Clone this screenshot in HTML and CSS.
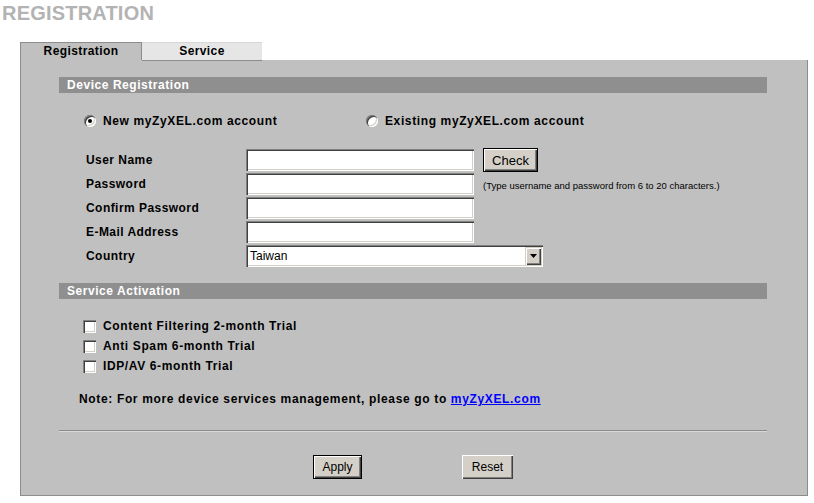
FILE: index.html
```html
<!DOCTYPE html>
<html>
<head>
<meta charset="utf-8">
<link rel="stylesheet" href="styles.css">
</head>
<body>
<h1 class="title">REGISTRATION</h1>
<div class="tabs">
  <div class="tab tab-active">Registration</div>
  <div class="tab tab-inactive">Service</div>
</div>
<div class="panel">
  <div class="section-bar">Device Registration</div>
  <div class="radio-row">
    <label class="opt opt-new"><span class="radio checked"></span><span class="opt-text">New myZyXEL.com account</span></label>
    <label class="opt"><span class="radio"></span><span class="opt-text">Existing myZyXEL.com account</span></label>
  </div>
  <div class="form">
    <div class="frow">
      <span class="flabel">User Name</span>
      <span class="field"></span>
      <span class="btn btn-default btn-check">Check</span>
    </div>
    <div class="frow">
      <span class="flabel">Password</span>
      <span class="field"></span>
      <span class="hint">(Type username and password from 6 to 20 characters.)</span>
    </div>
    <div class="frow">
      <span class="flabel">Confirm Password</span>
      <span class="field"></span>
    </div>
    <div class="frow">
      <span class="flabel">E-Mail Address</span>
      <span class="field"></span>
    </div>
    <div class="frow">
      <span class="flabel">Country</span>
      <span class="select"><span class="select-value">Taiwan</span><span class="select-arrow"><svg width="7" height="4" viewBox="0 0 7 4"><path d="M0 0h7L3.5 4z" fill="#000"/></svg></span></span>
    </div>
  </div>
  <div class="section-bar section-bar-2">Service Activation</div>
  <div class="checks">
    <label class="crow"><span class="checkbox"></span><span class="opt-text">Content Filtering 2-month Trial</span></label>
    <label class="crow"><span class="checkbox"></span><span class="opt-text">Anti Spam 6-month Trial</span></label>
    <label class="crow"><span class="checkbox"></span><span class="opt-text">IDP/AV 6-month Trial</span></label>
  </div>
  <div class="note">Note: For more device services management, please go to <a class="link" href="#">myZyXEL.com</a></div>
  <div class="divider"></div>
  <div class="actions">
    <span class="btn btn-default btn-apply">Apply</span>
    <span class="btn btn-reset">Reset</span>
  </div>
</div>
</body>
</html>
```
FILE: styles.css
```css
* { box-sizing: border-box; }
html, body { margin: 0; padding: 0; background: #fff; }
body {
  font-family: "Liberation Sans", Arial, sans-serif;
  font-size: 12px;
  color: #000;
  width: 814px;
  height: 503px;
  overflow: hidden;
}
.title {
  margin: 0;
  padding: 3px 0 0 2px;
  height: 42px;
  font-size: 20px;
  line-height: 20px;
  font-weight: bold;
  color: #b3b3b3;
  letter-spacing: 0.2px;
}
.tabs {
  display: flex;
  margin-left: 20px;
  height: 18px;
}
.tab {
  height: 18px;
  line-height: 17px;
  text-align: center;
  font-weight: bold;
  font-size: 12px;
  letter-spacing: 0.4px;
}
.tab-active {
  width: 122px;
  background: #c0c0c0;
  border: 1px solid #8c8c8c;
  border-bottom: none;
}
.tab-inactive {
  position: relative;
  z-index: 1;
  width: 120px;
  background: #e6e6e6;
  border-top: 1px solid #d6d6d6;
  border-bottom: 1px solid #8c8c8c;
  height: 19px;
}
.panel {
  margin-left: 20px;
  width: 788px;
  height: 436px;
  background: #c0c0c0;
  border: 1px solid #8c8c8c;
  border-top: none;
  padding: 17px 40px 0 38px;
}
.section-bar {
  height: 16px;
  line-height: 16px;
  background: #8f8f8f;
  color: #fff;
  font-weight: bold;
  padding-left: 8px;
  letter-spacing: 0.55px;
}
.radio-row {
  display: flex;
  height: 20px;
  align-items: center;
  margin-top: 18px;
  padding-left: 25px;
}
.opt {
  display: flex;
  align-items: center;
  font-weight: bold;
  letter-spacing: 0.62px;
}
.opt-new { width: 282px; }
.opt-text { margin-left: 7px; }
.radio {
  position: relative;
  display: inline-block;
  width: 12px;
  height: 12px;
  border-radius: 50%;
  background: #fff;
  box-shadow: inset 1px 1px 0 #808080, inset 2px 2px 0 #404040, inset -1px -1px 0 #ffffff, inset -2px -2px 0 #d4d0c8;
}
.radio.checked::after {
  content: "";
  position: absolute;
  left: 4px;
  top: 4px;
  width: 4px;
  height: 4px;
  border-radius: 50%;
  background: #000;
}
.form {
  margin-top: 17px;
  padding-left: 27px;
}
.frow {
  display: flex;
  align-items: center;
  height: 24px;
}
.flabel {
  width: 160px;
  font-weight: bold;
  letter-spacing: 0.45px;
}
.field {
  display: inline-block;
  width: 228px;
  height: 22px;
  background: #fff;
  box-shadow: inset 1px 1px 0 #808080, inset 2px 2px 0 #404040, inset -1px -1px 0 #ffffff, inset -2px -2px 0 #d4d0c8;
}
.btn {
  display: inline-flex;
  align-items: center;
  justify-content: center;
  height: 24px;
  background: #d4d0c8;
  font-size: 12px;
  color: #000;
  box-shadow: inset 1px 1px 0 #ffffff, inset -1px -1px 0 #404040, inset -2px -2px 0 #808080;
}
.btn-default {
  border: 1px solid #000;
}
.btn-check { width: 55px; margin-left: 9px; font-size: 13px; }
.hint {
  margin-left: 9px;
  font-size: 9.5px;
  margin-top: 3px;
}
.select {
  display: inline-flex;
  align-items: center;
  width: 297px;
  height: 22px;
  background: #fff;
  box-shadow: inset 1px 1px 0 #808080, inset 2px 2px 0 #404040, inset -1px -1px 0 #ffffff, inset -2px -2px 0 #d4d0c8;
  padding: 2px;
}
.select-value { flex: 1; padding-left: 2px; font-size: 12px; }
.select-arrow {
  width: 16px;
  height: 18px;
  background: #d4d0c8;
  display: flex;
  align-items: center;
  justify-content: center;
  box-shadow: inset 1px 1px 0 #d4d0c8, inset 2px 2px 0 #ffffff, inset -1px -1px 0 #404040, inset -2px -2px 0 #808080;
}
.section-bar-2 { margin-top: 15px; }
.checks {
  margin-top: 17px;
  padding-left: 24px;
}
.crow {
  display: flex;
  align-items: center;
  height: 20px;
  font-weight: bold;
  letter-spacing: 0.62px;
}
.checkbox {
  display: inline-block;
  width: 13px;
  height: 13px;
  background: #fff;
  box-shadow: inset 1px 1px 0 #808080, inset 2px 2px 0 #404040, inset -1px -1px 0 #ffffff, inset -2px -2px 0 #d4d0c8;
}
.note {
  margin-top: 13px;
  height: 20px;
  line-height: 20px;
  padding-left: 20px;
  font-weight: bold;
  letter-spacing: 0.65px;
}
.link { color: #0000ff; text-decoration: underline; }
.divider {
  margin-top: 21px;
  height: 2px;
  border-top: 1px solid #8c8c8c;
  border-bottom: 1px solid #d8d8d8;
}
.actions {
  margin-top: 23px;
  display: flex;
  padding-left: 254px;
}
.btn-apply { width: 49px; }
.btn-reset { width: 51px; margin-left: 100px; }
```
